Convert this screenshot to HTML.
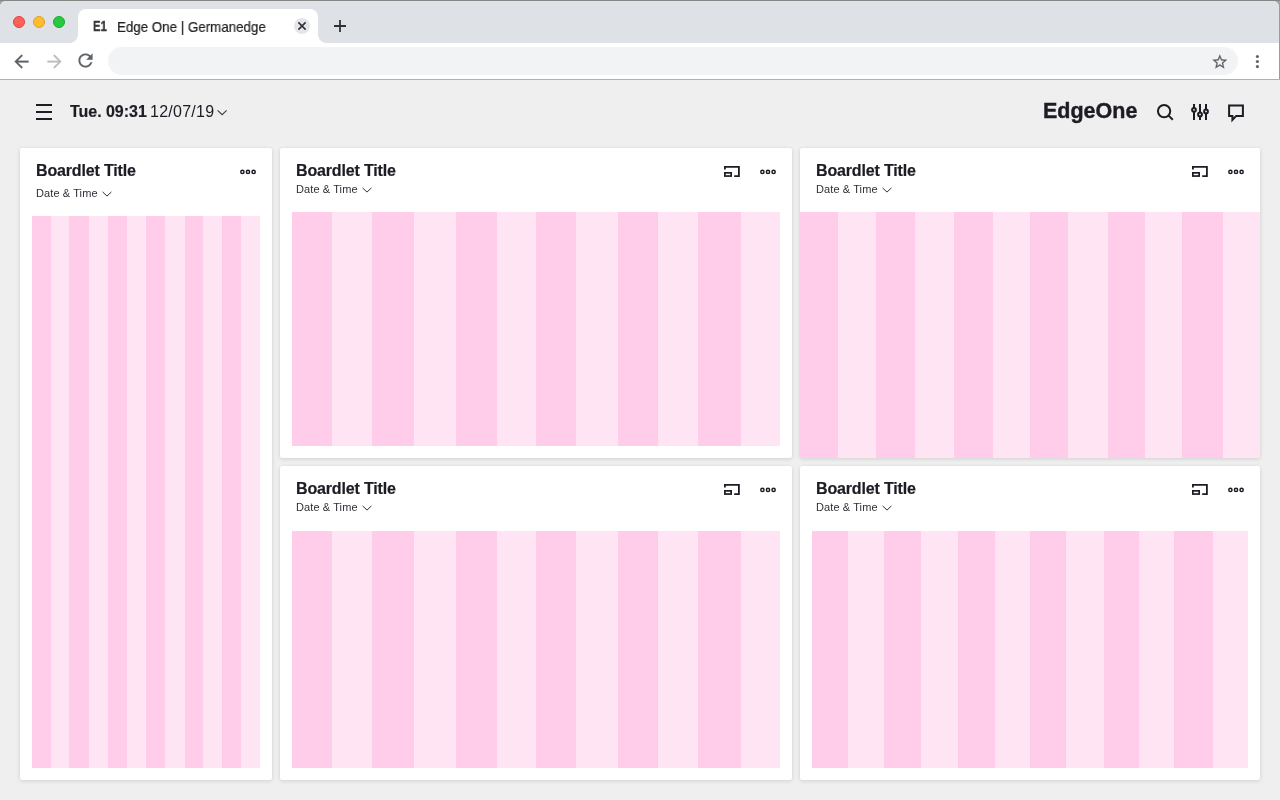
<!DOCTYPE html>
<html>
<head>
<meta charset="utf-8">
<title>Edge One | Germanedge</title>
<style>
  * { box-sizing: border-box; margin: 0; padding: 0; }
  html, body { width: 1280px; height: 800px; overflow: hidden; }
  body { position: relative; background: #efefef; font-family: "Liberation Sans", sans-serif; color: #1c1c24; }
  .abs { position: absolute; }
  .t { position: absolute; white-space: nowrap; line-height: 1; transform-origin: 0 0; will-change: transform; }

  /* ---------- browser chrome ---------- */
  #outer { position: absolute; left: 0; top: 0; width: 1280px; height: 80px; background: linear-gradient(to bottom, #858583 0, #858583 1px, #a4a4a2 1.5px, #9c9c9c 8px); }
  #chrome { position: absolute; left: 0; top: 1px; width: 1279px; height: 78px; background: #fff; border-radius: 6px 6px 0 0; overflow: hidden; }
  #tabstrip { position: absolute; left: 0; top: 0; width: 1279px; height: 41.5px; background: #dee1e6; }
  #tab { position: absolute; left: 78px; top: 8px; width: 240px; height: 33.5px; background: #fff; border-radius: 8px 8px 0 0; }
  #tab:before, #tab:after { content: ""; position: absolute; bottom: 0; width: 8px; height: 8px; }
  #tab:before { left: -8px; background: radial-gradient(circle at 0 0, transparent 7.5px, #fff 8px); }
  #tab:after { right: -8px; background: radial-gradient(circle at 100% 0, transparent 7.5px, #fff 8px); }
  .light { position: absolute; top: 15px; width: 12px; height: 12px; border-radius: 50%; }
  #omni { position: absolute; left: 108px; top: 46px; width: 1130px; height: 28px; border-radius: 14px; background: #f1f3f4; }
  #cline { position: absolute; left: 0; top: 79px; width: 1280px; height: 1px; background: #b2afb2; }

  /* ---------- cards ---------- */
  .card { position: absolute; background: #fff; border-radius: 2px; box-shadow: 0 1px 4px rgba(0,0,0,0.13), 0 0 1px rgba(0,0,0,0.05); }
  .stripes { position: absolute; }
  :root { --d: #ffcde9; --l: #ffe4f3; }
  .s-left { background: linear-gradient(90deg,var(--d) 0px 19px,var(--l) 19px 37px,var(--d) 37px 57px,var(--l) 57px 76px,var(--d) 76px 95px,var(--l) 95px 114px,var(--d) 114px 133px,var(--l) 133px 153px,var(--d) 153px 171px,var(--l) 171px 190px,var(--d) 190px 209px,var(--l) 209px 228px); }
  .s-mid { background: linear-gradient(90deg,var(--d) 0px 40px,var(--l) 40px 80px,var(--d) 80px 122px,var(--l) 122px 164px,var(--d) 164px 205px,var(--l) 205px 244px,var(--d) 244px 284px,var(--l) 284px 326px,var(--d) 326px 366px,var(--l) 366px 406px,var(--d) 406px 449px,var(--l) 449px 488px); }
  .s-rt { background: linear-gradient(90deg,var(--d) 0px 38px,var(--l) 38px 76px,var(--d) 76px 115px,var(--l) 115px 154px,var(--d) 154px 193px,var(--l) 193px 230px,var(--d) 230px 268px,var(--l) 268px 308px,var(--d) 308px 345px,var(--l) 345px 382px,var(--d) 382px 423px,var(--l) 423px 460px); }
  .s-rb { background: linear-gradient(90deg,var(--d) 0px 36px,var(--l) 36px 72px,var(--d) 72px 109px,var(--l) 109px 146px,var(--d) 146px 183px,var(--l) 183px 218px,var(--d) 218px 254px,var(--l) 254px 292px,var(--d) 292px 327px,var(--l) 327px 362px,var(--d) 362px 401px,var(--l) 401px 436px); }
  .title { font-weight: bold; font-size: 16px; letter-spacing: -0.16px; margin-left: -0.5px; -webkit-text-stroke: 0.2px #1c1c24; }
  .sub { font-size: 11px; color: #2e2e36; letter-spacing: 0.1px; margin-left: -0.4px; }
</style>
</head>
<body>

<!-- ================= BROWSER CHROME ================= -->
<div id="outer"></div>
<div id="chrome">
  <div id="tabstrip"></div>
  <div class="light" style="left:13px;background:#fe5f57;border:0.5px solid #e0443e;"></div>
  <div class="light" style="left:33px;background:#febc2e;border:0.5px solid #dea123;"></div>
  <div class="light" style="left:53px;background:#28c840;border:0.5px solid #1aab29;"></div>
  <div id="tab"></div>
  <!-- favicon + tab title (coords relative to #chrome: page y - 1) -->
  <div class="t" style="left:93.4px;top:18.4px;font-weight:bold;font-size:14.2px;color:#35363a;transform:scaleX(0.8);-webkit-text-stroke:0.35px #35363a;">E1</div>
  <div class="t" style="left:116.6px;top:19.2px;font-size:14.2px;color:#202124;-webkit-text-stroke:0.2px #202124;transform:scaleX(0.94);">Edge One | Germanedge</div>
  <div class="abs" style="left:294px;top:17px;width:16px;height:16px;border-radius:50%;background:#e4e6ea;"></div>
  <svg class="abs" style="left:294px;top:17px;" width="16" height="16" viewBox="0 0 16 16"><path d="M4.4 4.4l7.2 7.2M11.6 4.4l-7.2 7.2" stroke="#303134" stroke-width="1.6" fill="none"/></svg>
  <svg class="abs" style="left:333px;top:18px;" width="14" height="14" viewBox="0 0 14 14"><path d="M7 1v12M1 7h12" stroke="#303134" stroke-width="1.8" fill="none"/></svg>
  <div id="omni"></div>
  <!-- back -->
  <svg class="abs" style="left:11.1px;top:49.6px;" width="21" height="21" viewBox="0 0 24 24"><path fill="#5f6368" stroke="#5f6368" stroke-width="0.25" d="M20 11H7.83l5.59-5.59L12 4l-8 8 8 8 1.41-1.41L7.83 13H20v-2z"/></svg>
  <!-- forward -->
  <svg class="abs" style="left:43.9px;top:49.6px;" width="21" height="21" viewBox="0 0 24 24"><path fill="#bcbec1" stroke="#bcbec1" stroke-width="0.25" d="M12 4l-1.41 1.41L16.17 11H4v2h12.17l-5.58 5.59L12 20l8-8z"/></svg>
  <!-- reload -->
  <svg class="abs" style="left:75.2px;top:49.2px;" width="21" height="21" viewBox="0 0 24 24"><path fill="#5f6368" stroke="#5f6368" stroke-width="0.2" d="M17.65 6.35C16.2 4.9 14.21 4 12 4c-4.42 0-7.99 3.58-7.99 8s3.57 8 7.99 8c3.73 0 6.84-2.55 7.73-6h-2.08c-.82 2.33-3.04 4-5.65 4-3.31 0-6-2.69-6-6s2.69-6 6-6c1.66 0 3.14.69 4.22 1.78L13 11h7V4l-2.35 2.35z"/></svg>
  <!-- star -->
  <svg class="abs" style="left:1211.2px;top:51.7px;" width="17.6" height="17.6" viewBox="0 0 24 24"><path fill="#5f6368" stroke="#5f6368" stroke-width="0.25" d="M22 9.24l-7.19-.62L12 2 9.19 8.63 2 9.24l5.46 4.73L5.82 21 12 17.27 18.18 21l-1.63-7.03L22 9.24zM12 15.4l-3.76 2.27 1-4.28-3.32-2.88 4.38-.38L12 6.1l1.71 4.04 4.38.38-3.32 2.88 1 4.28L12 15.4z"/></svg>
  <!-- menu dots -->
  <svg class="abs" style="left:1253px;top:52px;" width="9" height="17" viewBox="0 0 9 17"><g fill="#5f6368"><circle cx="4.4" cy="3.5" r="1.55"/><circle cx="4.4" cy="8.5" r="1.55"/><circle cx="4.4" cy="13.6" r="1.55"/></g></svg>
</div>
<div id="cline"></div>

<!-- ================= APP HEADER ================= -->
<div class="abs" style="left:36px;top:104px;width:16px;height:2px;background:#1c1c24;"></div>
<div class="abs" style="left:36px;top:111px;width:16px;height:2px;background:#1c1c24;"></div>
<div class="abs" style="left:36px;top:118px;width:16px;height:2px;background:#1c1c24;"></div>
<div class="t" style="left:70px;top:104px;font-size:16px;font-weight:bold;letter-spacing:-0.03px;-webkit-text-stroke:0.2px #1c1c24;">Tue. 09:31</div>
<div class="t" style="left:149.5px;top:104px;font-size:16px;letter-spacing:0.25px;">12/07/19</div>
<svg class="abs" style="left:216px;top:108px;" width="12" height="9" viewBox="0 0 12 9"><path d="M1.6 2.4L6.1 6.7l4.5-4.3" stroke="#3a3a42" stroke-width="1.1" fill="none"/></svg>
<div class="t" style="left:1043.3px;top:101px;font-size:21.5px;font-weight:bold;-webkit-text-stroke:0.4px #1c1c24;">EdgeOne</div>

<!-- header right icons -->
<svg class="abs" style="left:1152px;top:100px;" width="100" height="26" viewBox="1152 100 100 26" fill="none" stroke="#1c1c24" stroke-width="2">
  <!-- search -->
  <circle cx="1164.1" cy="111.1" r="6.15"/>
  <path d="M1168.6 115.6l4.2 4.2"/>
  <!-- sliders -->
  <path d="M1194 104v16M1200 104v16M1206 104v16"/>
  <circle cx="1194" cy="109.8" r="1.9" fill="#efefef"/>
  <circle cx="1200" cy="114.4" r="1.9" fill="#efefef"/>
  <circle cx="1206" cy="111.4" r="1.9" fill="#efefef"/>
  <!-- chat -->
  <path d="M1229.1 105.4H1242.9V115.9H1236.2L1232.4 119.9V115.9H1229.1Z"/>
</svg>

<!-- ================= CARDS ================= -->
<div class="card" style="left:20px;top:148px;width:252px;height:632px;"></div>
<div class="card" style="left:280px;top:148px;width:512px;height:310px;"></div>
<div class="card" style="left:280px;top:466px;width:512px;height:314px;"></div>
<div class="card" style="left:800px;top:148px;width:460px;height:310px;"></div>
<div class="card" style="left:800px;top:466px;width:460px;height:314px;"></div>

<!-- stripes -->
<div class="stripes s-left" style="left:32px;top:216px;width:228px;height:552px;"></div>
<div class="stripes s-mid"  style="left:292px;top:212px;width:488px;height:234px;"></div>
<div class="stripes s-mid"  style="left:292px;top:531px;width:488px;height:237px;"></div>
<div class="stripes s-rt"   style="left:800px;top:212px;width:460px;height:246px;"></div>
<div class="stripes s-rb"   style="left:812px;top:531px;width:436px;height:237px;"></div>

<!-- titles -->
<div class="t title" style="left:36px;top:163px;">Boardlet Title</div>
<div class="t title" style="left:296px;top:163px;">Boardlet Title</div>
<div class="t title" style="left:816px;top:163px;">Boardlet Title</div>
<div class="t title" style="left:296px;top:481px;">Boardlet Title</div>
<div class="t title" style="left:816px;top:481px;">Boardlet Title</div>

<!-- subtitles -->
<div class="t sub" style="left:36px;top:188px;">Date &amp; Time</div>
<div class="t sub" style="left:296px;top:184px;">Date &amp; Time</div>
<div class="t sub" style="left:816px;top:184px;">Date &amp; Time</div>
<div class="t sub" style="left:296px;top:502px;">Date &amp; Time</div>
<div class="t sub" style="left:816px;top:502px;">Date &amp; Time</div>

<!-- sub chevrons -->
<svg class="abs" style="left:101px;top:189.5px;" width="12" height="9" viewBox="0 0 12 9"><path d="M1.6 1.9L6 6.1l4.4-4.2" stroke="#2e2e36" stroke-width="1" fill="none"/></svg>
<svg class="abs" style="left:361px;top:185.5px;" width="12" height="9" viewBox="0 0 12 9"><path d="M1.6 1.9L6 6.1l4.4-4.2" stroke="#2e2e36" stroke-width="1" fill="none"/></svg>
<svg class="abs" style="left:881px;top:185.5px;" width="12" height="9" viewBox="0 0 12 9"><path d="M1.6 1.9L6 6.1l4.4-4.2" stroke="#2e2e36" stroke-width="1" fill="none"/></svg>
<svg class="abs" style="left:361px;top:503.5px;" width="12" height="9" viewBox="0 0 12 9"><path d="M1.6 1.9L6 6.1l4.4-4.2" stroke="#2e2e36" stroke-width="1" fill="none"/></svg>
<svg class="abs" style="left:881px;top:503.5px;" width="12" height="9" viewBox="0 0 12 9"><path d="M1.6 1.9L6 6.1l4.4-4.2" stroke="#2e2e36" stroke-width="1" fill="none"/></svg>
<!-- card icons -->
<svg class="abs" style="left:239px;top:168px;" width="18" height="8" viewBox="0 0 18 8" fill="none" stroke="#1c1c24" stroke-width="1.5"><circle cx="3.4" cy="3.9" r="1.6"/><circle cx="9" cy="3.9" r="1.6"/><circle cx="14.6" cy="3.9" r="1.6"/></svg>
<svg class="abs" style="left:759px;top:168px;" width="18" height="8" viewBox="0 0 18 8" fill="none" stroke="#1c1c24" stroke-width="1.5"><circle cx="3.4" cy="3.9" r="1.6"/><circle cx="9" cy="3.9" r="1.6"/><circle cx="14.6" cy="3.9" r="1.6"/></svg>
<svg class="abs" style="left:1227px;top:168px;" width="18" height="8" viewBox="0 0 18 8" fill="none" stroke="#1c1c24" stroke-width="1.5"><circle cx="3.4" cy="3.9" r="1.6"/><circle cx="9" cy="3.9" r="1.6"/><circle cx="14.6" cy="3.9" r="1.6"/></svg>
<svg class="abs" style="left:759px;top:486px;" width="18" height="8" viewBox="0 0 18 8" fill="none" stroke="#1c1c24" stroke-width="1.5"><circle cx="3.4" cy="3.9" r="1.6"/><circle cx="9" cy="3.9" r="1.6"/><circle cx="14.6" cy="3.9" r="1.6"/></svg>
<svg class="abs" style="left:1227px;top:486px;" width="18" height="8" viewBox="0 0 18 8" fill="none" stroke="#1c1c24" stroke-width="1.5"><circle cx="3.4" cy="3.9" r="1.6"/><circle cx="9" cy="3.9" r="1.6"/><circle cx="14.6" cy="3.9" r="1.6"/></svg>
<svg class="abs" style="left:722px;top:164px;" width="20" height="15" viewBox="-2 -2 20 15" fill="none" stroke="#1c1c24" stroke-width="1.8"><path d="M0.9 3.6V0.9H14.9V10.1H10.2"/><rect x="0.85" y="6.85" width="6.3" height="3.2" stroke-width="1.7"/></svg>
<svg class="abs" style="left:1190px;top:164px;" width="20" height="15" viewBox="-2 -2 20 15" fill="none" stroke="#1c1c24" stroke-width="1.8"><path d="M0.9 3.6V0.9H14.9V10.1H10.2"/><rect x="0.85" y="6.85" width="6.3" height="3.2" stroke-width="1.7"/></svg>
<svg class="abs" style="left:722px;top:482px;" width="20" height="15" viewBox="-2 -2 20 15" fill="none" stroke="#1c1c24" stroke-width="1.8"><path d="M0.9 3.6V0.9H14.9V10.1H10.2"/><rect x="0.85" y="6.85" width="6.3" height="3.2" stroke-width="1.7"/></svg>
<svg class="abs" style="left:1190px;top:482px;" width="20" height="15" viewBox="-2 -2 20 15" fill="none" stroke="#1c1c24" stroke-width="1.8"><path d="M0.9 3.6V0.9H14.9V10.1H10.2"/><rect x="0.85" y="6.85" width="6.3" height="3.2" stroke-width="1.7"/></svg>

</body>
</html>
